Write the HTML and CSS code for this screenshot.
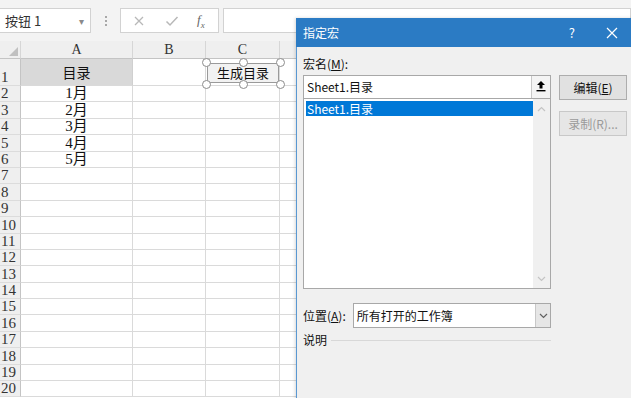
FILE: index.html
```html
<!DOCTYPE html>
<html lang="zh-CN">
<head>
<meta charset="utf-8">
<title>指定宏</title>
<link rel="stylesheet" href="styles.css">
</head>
<body>
<div class="app">
  <div class="toolbar">
    <div class="namebox"><span class="nb-text">按钮 1</span><span class="nb-caret">▾</span></div>
    <div class="sep"><i></i><i></i><i></i></div>
    <div class="fxbox">
      <svg class="fx-ico" width="12" height="12" viewBox="0 0 12 12"><path d="M2 2 L10 10 M10 2 L2 10" stroke="#b8b8b8" stroke-width="1.3" fill="none"/></svg>
      <svg class="fx-ico" width="14" height="12" viewBox="0 0 14 12"><path d="M1.5 6.5 L5 10 L12.5 2" stroke="#b8b8b8" stroke-width="1.5" fill="none"/></svg>
      <span class="fx-text">f<sub>x</sub></span>
    </div>
    <div class="formula"></div>
  </div>

  <div class="sheet">
    <div class="row hdr"><div class="corner"></div><div class="ch">A</div><div class="ch">B</div><div class="ch">C</div><div class="ch"></div></div>
    <div class="row r1"><div class="rh">1</div><div class="c title">目录</div><div class="c"></div><div class="c"></div><div class="c"></div></div>
    <div class="row"><div class="rh">2</div><div class="c">1月</div><div class="c"></div><div class="c"></div><div class="c"></div></div>
    <div class="row"><div class="rh">3</div><div class="c">2月</div><div class="c"></div><div class="c"></div><div class="c"></div></div>
    <div class="row"><div class="rh">4</div><div class="c">3月</div><div class="c"></div><div class="c"></div><div class="c"></div></div>
    <div class="row"><div class="rh">5</div><div class="c">4月</div><div class="c"></div><div class="c"></div><div class="c"></div></div>
    <div class="row"><div class="rh">6</div><div class="c">5月</div><div class="c"></div><div class="c"></div><div class="c"></div></div>
    <div class="row"><div class="rh">7</div><div class="c"></div><div class="c"></div><div class="c"></div><div class="c"></div></div>
    <div class="row"><div class="rh">8</div><div class="c"></div><div class="c"></div><div class="c"></div><div class="c"></div></div>
    <div class="row"><div class="rh">9</div><div class="c"></div><div class="c"></div><div class="c"></div><div class="c"></div></div>
    <div class="row"><div class="rh">10</div><div class="c"></div><div class="c"></div><div class="c"></div><div class="c"></div></div>
    <div class="row"><div class="rh">11</div><div class="c"></div><div class="c"></div><div class="c"></div><div class="c"></div></div>
    <div class="row"><div class="rh">12</div><div class="c"></div><div class="c"></div><div class="c"></div><div class="c"></div></div>
    <div class="row"><div class="rh">13</div><div class="c"></div><div class="c"></div><div class="c"></div><div class="c"></div></div>
    <div class="row"><div class="rh">14</div><div class="c"></div><div class="c"></div><div class="c"></div><div class="c"></div></div>
    <div class="row"><div class="rh">15</div><div class="c"></div><div class="c"></div><div class="c"></div><div class="c"></div></div>
    <div class="row"><div class="rh">16</div><div class="c"></div><div class="c"></div><div class="c"></div><div class="c"></div></div>
    <div class="row"><div class="rh">17</div><div class="c"></div><div class="c"></div><div class="c"></div><div class="c"></div></div>
    <div class="row"><div class="rh">18</div><div class="c"></div><div class="c"></div><div class="c"></div><div class="c"></div></div>
    <div class="row"><div class="rh">19</div><div class="c"></div><div class="c"></div><div class="c"></div><div class="c"></div></div>
    <div class="row"><div class="rh">20</div><div class="c"></div><div class="c"></div><div class="c"></div><div class="c"></div></div>
  </div>

  <div class="shape">
    <div class="shape-btn">生成目录</div>
    <span class="hd tl"></span><span class="hd tm"></span><span class="hd tr"></span>
    <span class="hd bl"></span><span class="hd bm"></span><span class="hd br"></span>
  </div>

  <div class="dialog">
    <div class="titlebar">
      <span class="dtitle">指定宏</span>
      <span class="dhelp">?</span>
      <svg class="dclose" width="12" height="12" viewBox="0 0 12 12"><path d="M1 1 L11 11 M11 1 L1 11" stroke="#fff" stroke-width="1.2" fill="none"/></svg>
    </div>
    <div class="dbody">
      <div class="leftcol">
        <div class="lbl">宏名(<u>M</u>):</div>
        <div class="namefield">
          <div class="nf-input">Sheet1.目录</div>
          <div class="nf-btn"><svg width="10" height="12" viewBox="0 0 10 12"><path d="M5 1 L1 5 H3.5 V8.5 H6.5 V5 H9 Z" fill="#000"/><rect x="0.5" y="10" width="9" height="1.4" fill="#000"/></svg></div>
        </div>
        <div class="listbox">
          <div class="items"><div class="item sel">Sheet1.目录</div></div>
          <div class="vscroll">
            <svg width="9" height="6" viewBox="0 0 9 6"><path d="M1 5 L4.5 1.5 L8 5" stroke="#c4c4c4" stroke-width="1.2" fill="none"/></svg>
            <svg width="9" height="6" viewBox="0 0 9 6"><path d="M1 1 L4.5 4.5 L8 1" stroke="#c4c4c4" stroke-width="1.2" fill="none"/></svg>
          </div>
        </div>
        <div class="locrow">
          <span class="lbl">位置(<u>A</u>):</span>
          <div class="select"><span class="sel-text">所有打开的工作簿</span><span class="sel-btn"><svg width="9" height="6" viewBox="0 0 9 6"><path d="M1 1 L4.5 4.5 L8 1" stroke="#606060" stroke-width="1.2" fill="none"/></svg></span></div>
        </div>
        <div class="descrow"><span class="lbl">说明</span><span class="rule"></span></div>
      </div>
      <div class="rightcol">
        <div class="btn">编辑(<u>E</u>)</div>
        <div class="btn disabled">录制(R)...</div>
      </div>
    </div>
  </div>
</div>
</body>
</html>
```
FILE: styles.css
```css
* { box-sizing: border-box; }
html, body { margin: 0; padding: 0; }
body {
  width: 631px;
  height: 398px;
  overflow: hidden;
  background: #ffffff;
  font-family: "Noto Sans CJK SC", sans-serif;
}
.app { position: relative; width: 631px; height: 398px; overflow: hidden; }

/* toolbar */
.toolbar {
  height: 41px;
  background: #f3f3f3;
  display: flex;
  align-items: flex-start;
  padding-top: 8px;
}
.namebox {
  width: 91px;
  height: 25px;
  background: #fff;
  border: 1px solid #d2d2d2;
  border-left: none;
  display: flex;
  align-items: center;
  justify-content: space-between;
  padding: 0 6px 0 5px;
  font-size: 13px;
  color: #333;
}
.nb-text { font-family: "Noto Sans CJK SC", sans-serif; }
.nb-caret { color: #8a8a8a; font-size: 10px; }
.sep {
  width: 29px;
  height: 25px;
  display: flex;
  flex-direction: column;
  align-items: center;
  justify-content: center;
  gap: 2px;
}
.sep i { display: block; width: 2px; height: 2px; background: #a8a8a8; }
.fxbox {
  width: 99px;
  height: 25px;
  background: #fff;
  border: 1px solid #d2d2d2;
  display: flex;
  align-items: center;
  padding-left: 12px;
  gap: 20px;
}
.fx-text {
  font-family: "Liberation Serif", serif;
  font-style: italic;
  font-size: 13px;
  color: #666;
  margin-left: -2px;
}
.fx-text sub { font-size: 9px; }
.formula {
  margin-left: 4px;
  flex: 1;
  height: 25px;
  background: #fff;
  border: 1px solid #d2d2d2;
}

/* sheet */
.sheet { display: flex; flex-direction: column; }
.row {
  display: grid;
  grid-template-columns: 21px 112px 73px 74px 1fr;
  height: 16.4px;
}
.row.hdr { height: 18px; }
.row.r1 { height: 27px; }
.corner, .ch {
  background: #efefef;
  border-right: 1px solid #d6d6d6;
  border-bottom: 1px solid #c4c4c4;
  position: relative;
}
.corner::after {
  content: "";
  position: absolute;
  right: 2px;
  bottom: 2px;
  border-left: 9px solid transparent;
  border-bottom: 9px solid #c0c0c0;
}
.ch {
  font-family: "Liberation Serif", serif;
  font-size: 14px;
  line-height: 17px;
  text-align: center;
  color: #333;
}
.rh {
  background: #efefef;
  border-right: 1px solid #c4c4c4;
  border-bottom: 1px solid #dcdcdc;
  font-family: "Liberation Serif", serif;
  font-size: 15px;
  color: #333;
  padding-left: 1px;
  display: flex;
  align-items: flex-end;
  line-height: 15px;
}
.c {
  border-right: 1px solid #dadada;
  border-bottom: 1px solid #dadada;
  font-family: "Liberation Serif", "Noto Sans CJK SC", serif;
  font-size: 15px;
  line-height: 15px;
  color: #111;
  text-align: center;
  display: flex;
  align-items: flex-end;
  justify-content: center;
}
.c.title {
  background: #d9d9d9;
  align-items: center;
  font-family: "Noto Sans CJK SC", sans-serif;
  font-size: 14px;
  border-right-color: #d0d0d0;
}

/* shape button */
.shape {
  position: absolute;
  left: 206px;
  top: 62px;
  width: 74px;
  height: 22px;
}
.shape-btn {
  position: absolute;
  inset: 1px;
  background: #f2f2f2;
  border: 1px solid #9a9a9a;
  font-size: 13px;
  line-height: 18px;
  text-align: center;
  color: #111;
}
.hd {
  position: absolute;
  width: 9px;
  height: 9px;
  border-radius: 50%;
  background: #fff;
  border: 1px solid #8c8c8c;
  margin: -4.5px 0 0 -4.5px;
}
.tl { left: 0; top: 0; } .tm { left: 50%; top: 0; } .tr { left: 100%; top: 0; }
.bl { left: 0; top: 100%; } .bm { left: 50%; top: 100%; } .br { left: 100%; top: 100%; }

/* dialog */
.dialog {
  position: absolute;
  left: 296px;
  top: 18px;
  width: 345px;
  height: 390px;
  background: #f0f0f0;
  border: 1px solid #5a98d2;
  box-shadow: -1px 0 3px rgba(0,0,0,0.15);
  font-size: 12px;
  color: #111;
}
.titlebar {
  height: 29px;
  background: #2b7bc4;
  color: #fff;
  display: flex;
  align-items: center;
  padding-left: 7px;
  margin: -1px -1px 0 -1px;
}
.dtitle { flex: 1; font-size: 12px; }
.dhelp { font-size: 13px; margin-right: 31px; }
.dclose { margin-right: 23px; }
.dbody {
  display: flex;
  padding: 9px 0 0 6px;
  gap: 8px;
}
.leftcol { width: 248px; display: flex; flex-direction: column; }
.lbl { font-size: 12px; line-height: 16px; }
.leftcol > .lbl { margin-bottom: 3px; }
.namefield {
  height: 24px;
  display: flex;
  border: 1px solid #a8a8a8;
  background: #fff;
}
.nf-input { flex: 1; padding: 0 3px; line-height: 22px; font-size: 12px; }
.nf-btn {
  width: 19px;
  border-left: 1px solid #c8c8c8;
  background: #f4f4f4;
  display: flex;
  align-items: flex-start;
  justify-content: center;
  padding-top: 4px;
}
.listbox {
  height: 191px;
  margin-top: -1px;
  border: 1px solid #a8a8a8;
  background: #fff;
  display: flex;
}
.items { flex: 1; padding: 2px 0 0 2px; }
.item { height: 15px; line-height: 15px; padding-left: 1px; font-size: 12px; }
.item.sel { background: #0078d7; color: #fff; }
.vscroll {
  width: 17px;
  background: #f0f0f0;
  display: flex;
  flex-direction: column;
  justify-content: space-between;
  align-items: center;
  padding: 7px 0 6px;
}
.locrow {
  display: flex;
  align-items: center;
  margin-top: 14px;
  gap: 7px;
}
.select {
  flex: 1;
  height: 25px;
  border: 1px solid #a8a8a8;
  background: #fff;
  display: flex;
}
.sel-text { flex: 1; padding-left: 3px; line-height: 23px; font-size: 12px; }
.sel-btn {
  width: 15px;
  background: #e6e6e6;
  border-left: 1px solid #c8c8c8;
  display: flex;
  align-items: center;
  justify-content: center;
}
.descrow { display: flex; align-items: center; margin-top: 4px; gap: 4px; }
.rule { flex: 1; height: 1px; background: #d8d8d8; margin-top: 1px; }
.rightcol { display: flex; flex-direction: column; gap: 11px; padding-top: 19px; }
.btn {
  width: 68px;
  height: 25px;
  background: #e1e1e1;
  border: 1px solid #adadad;
  text-align: center;
  line-height: 23px;
  font-size: 12px;
}
.btn.disabled { background: #e6e6e6; border-color: #c8c8c8; color: #9a9a9a; }
```
